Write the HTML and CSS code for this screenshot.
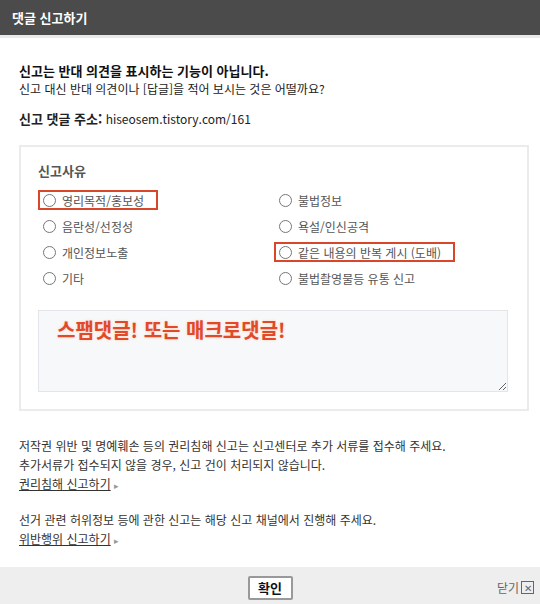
FILE: index.html
```html
<!DOCTYPE html>
<html lang="ko">
<head>
    <meta charset="UTF-8">
    <meta name="viewport" content="width=device-width, initial-scale=1.0">
    <title>댓글 신고하기</title>
    <link rel="stylesheet" href="styles.css">
</head>
<body>
    <div class="popup">
        <div class="popup-head">댓글 신고하기</div>

        <div class="popup-body">
            <p class="notice">
                <strong>신고는 반대 의견을 표시하는 기능이 아닙니다.</strong><br>
                신고 대신 반대 의견이나 [답글]을 적어 보시는 것은 어떨까요?
            </p>
            <p class="address"><strong>신고 댓글 주소:</strong> hiseosem.tistory.com/161</p>

            <div class="reason-box">
                <div class="reason-title">신고사유</div>
                <div class="reasons">
                    <label class="reason mark"><input type="radio" name="reason"> 영리목적/홍보성</label>
                    <label class="reason"><input type="radio" name="reason"> 불법정보</label>
                    <label class="reason"><input type="radio" name="reason"> 음란성/선정성</label>
                    <label class="reason"><input type="radio" name="reason"> 욕설/인신공격</label>
                    <label class="reason"><input type="radio" name="reason"> 개인정보노출</label>
                    <label class="reason mark"><input type="radio" name="reason"> 같은 내용의 반복 게시 (도배)</label>
                    <label class="reason"><input type="radio" name="reason"> 기타</label>
                    <label class="reason"><input type="radio" name="reason"> 불법촬영물등 유통 신고</label>
                </div>
                <textarea class="memo">스팸댓글! 또는 매크로댓글!</textarea>
            </div>

            <p class="info">
                저작권 위반 및 명예훼손 등의 권리침해 신고는 신고센터로 추가 서류를 접수해 주세요.<br>
                추가서류가 접수되지 않을 경우, 신고 건이 처리되지 않습니다.<br>
                <a href="#" class="more">권리침해 신고하기</a>
            </p>
            <p class="info">
                선거 관련 허위정보 등에 관한 신고는 해당 신고 채널에서 진행해 주세요.<br>
                <a href="#" class="more">위반행위 신고하기</a>
            </p>
        </div>

        <div class="popup-foot">
            <button class="btn-ok">확인</button>
            <a href="#" class="close">닫기 <span class="close-x">✕</span></a>
        </div>
    </div>
</body>
</html>
```

FILE: styles.css
```css
body{
    margin: 0;
    font-family: "Noto Sans CJK KR", "Noto Sans", sans-serif;
    font-size: 12px;
    color: #333;
    background: #fff;
}
.popup{
    width: 540px;
    height: 604px;
    display: flex;
    flex-direction: column;
    overflow: hidden;
}
.popup-head{
    height: 35px;
    line-height: 35px;
    padding-left: 12px;
    background: #4b4b4b;
    border-bottom: 3px solid #e9e9e9;
    color: #fff;
    font-size: 13px;
    font-weight: bold;
}
.popup-body{
    flex: 1;
    padding: 24px 11px 0 19px;
}
p{
    margin: 0;
}
.notice{
    line-height: 18px;
    color: #222;
}
.notice strong{
    font-size: 13px;
    color: #111;
}
.address{
    margin-top: 11px;
    color: #222;
}
.address strong{
    font-size: 13px;
}
.reason-box{
    margin-top: 17px;
    border: 2px solid #ebebeb;
    padding: 16px 20px 17px 17px;
}
.reason-title{
    font-size: 13px;
    font-weight: bold;
    color: #555;
    line-height: 16px;
}
.reasons{
    display: grid;
    grid-template-columns: 236px 1fr;
    row-gap: 6px;
    margin-top: 11px;
}
.reason{
    display: flex;
    align-items: center;
    gap: 6px;
    height: 20px;
    box-sizing: border-box;
    color: #555;
    justify-self: start;
    padding: 0 12px 0 3px;
    border: 2px solid transparent;
}
.reason input{
    margin: 0;
    width: 13px;
    height: 13px;
}
.reason.mark{
    border-color: #d9472b;
}
.memo{
    display: block;
    width: 470px;
    height: 82px;
    box-sizing: border-box;
    margin-top: 22px;
    padding: 4px 18px;
    background: #f7f8fa;
    border: 1px solid #e3e5e8;
    font-family: "Noto Sans CJK KR", sans-serif;
    font-size: 20px;
    font-weight: bold;
    color: #e0492a;
    text-shadow: 0 0 3px #ffd2b8;
    resize: vertical;
}
.info{
    line-height: 19px;
    color: #333;
    margin-top: 25px;
}
.info + .info{
    margin-top: 15px;
}
.more{
    color: #333;
    text-decoration: underline;
}
.more::after{
    content: "▸";
    display: inline-block;
    margin-left: 3px;
    font-size: 9px;
    color: #999;
}
.popup-foot{
    height: 37px;
    background: #eeeeee;
    display: flex;
    align-items: center;
    justify-content: center;
    position: relative;
}
.btn-ok{
    width: 45px;
    height: 24px;
    margin-top: 4px;
    background: #fff;
    border: 2px solid #999;
    border-radius: 2px;
    font-family: "Noto Sans CJK KR", sans-serif;
    font-size: 13px;
    font-weight: bold;
    color: #111;
    padding: 0;
}
.close{
    position: absolute;
    right: 6px;
    top: 12px;
    display: flex;
    align-items: center;
    gap: 2px;
    color: #666;
    text-decoration: none;
}
.close-x{
    width: 11px;
    height: 11px;
    border: 1px solid #666;
    font-size: 10px;
    line-height: 11px;
    text-align: center;
}
```
